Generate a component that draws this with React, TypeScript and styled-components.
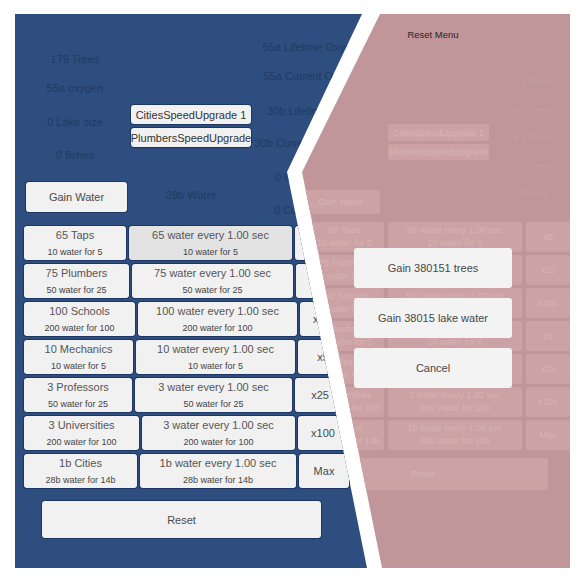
import styled, { createGlobalStyle } from 'styled-components';

const GlobalStyle = createGlobalStyle`
  html, body {
    margin: 0;
    background: #ffffff;
  }
  body {
    font-family: "Liberation Sans", Arial, sans-serif;
  }
`;

const Frame = styled.div`
  width: 584px;
  height: 584px;
  box-sizing: border-box;
  padding: 14px 0 0 15px;
  background: #ffffff;
  overflow: hidden;
`;

// both screenshots share one cell; the white chevron between them is the frame showing through
const Stage = styled.div`
  display: grid;
  width: 555px;
  height: 554px;
`;

const GamePanel = styled.div`
  grid-area: 1 / 1;
  background: #2d4e7e;
  clip-path: polygon(0 0, 347px 0, 272px 158px, 352px 554px, 0 554px);
  display: flex;
  flex-direction: column;
`;

const TopArea = styled.div`
  display: flex;
  height: 212px;
`;

const StatColumn = styled.div<{ $width: number; $ml?: number }>`
  display: flex;
  flex-direction: column;
  align-items: center;
  box-sizing: border-box;
  width: ${(p) => p.$width}px;
  margin-left: ${(p) => p.$ml ?? 0}px;
  flex-shrink: 0;
`;

const LeftStats = styled(StatColumn)`
  padding-left: 4px;
  align-items: stretch;
  text-align: center;
`;

const Stat = styled.div<{ $mt: number }>`
  margin-top: ${(p) => p.$mt}px;
  font-size: 11px;
  line-height: 14px;
  color: #213b63;
  white-space: nowrap;
  text-align: center;
`;

const UpgradeColumn = styled.div`
  display: flex;
  flex-direction: column;
  align-items: stretch;
  width: 120px;
  padding-top: 91px;
  gap: 4px;
  flex-shrink: 0;
`;

const UnityButton = styled.div<{ $pressed?: boolean }>`
  display: flex;
  align-items: center;
  justify-content: center;
  box-sizing: border-box;
  background: ${(p) => (p.$pressed ? '#e3e3e3' : '#f1f1f1')};
  border-radius: 3px;
  box-shadow: 0 0 0 1px #1d3762;
  color: #4a4a4a;
  font-size: 11px;
  white-space: nowrap;
  overflow: hidden;
`;

const SmallButton = styled(UnityButton)`
  height: 19px;
  color: #333;
`;

const GainButton = styled(UnityButton)`
  width: 101px;
  height: 30px;
  margin: 20px 0 0 7px;
`;

const Grid = styled.div`
  display: flex;
  flex-direction: column;
  gap: 4px;
  padding-left: 9px;
`;

const Row = styled.div`
  display: flex;
  gap: 3px;
  height: 34px;
`;

const Cell = styled(UnityButton)<{ $w: number }>`
  width: ${(p) => p.$w}px;
  flex-shrink: 0;
  flex-direction: column;
  justify-content: flex-start;
  padding-top: 1px;
`;

const CellTitle = styled.div`
  font-size: 11px;
  line-height: 16px;
  color: #555;
`;

const CellSub = styled.div`
  margin-top: 3px;
  font-size: 9px;
  line-height: 12px;
  color: #444;
`;

const MultButton = styled(UnityButton)`
  width: 50px;
  flex-shrink: 0;
`;

const ResetButton = styled(UnityButton)`
  width: 279px;
  height: 37px;
  margin: 13px 0 0 27px;
`;

/* ---------- faded reset-menu screenshot ---------- */

const MenuPanel = styled.div`
  grid-area: 1 / 1;
  position: relative;
  background: #c0969a;
  clip-path: polygon(365px 0, 555px 0, 555px 554px, 367px 554px, 287px 158px);
  display: flex;
  flex-direction: column;
`;

const MenuTitle = styled.div`
  height: 42px;
  padding-left: 380px;
  width: 76px;
  text-align: center;
  line-height: 42px;
  font-size: 9.5px;
  color: #2a2526;
`;

const FadedTop = styled.div`
  display: flex;
  height: 166px;
`;

const FadedLeft = styled.div`
  width: 373px;
  display: flex;
  flex-direction: column;
  align-items: flex-end;
`;

const FadedMid = styled.div`
  width: 101px;
  display: flex;
  flex-direction: column;
  gap: 3px;
  padding-top: 68px;
`;

const FadedRight = styled.div`
  flex: 1;
  display: flex;
  flex-direction: column;
  align-items: center;
  padding-top: 20px;
  gap: 16px;
`;

const FadedButton = styled.div<{ $w?: number; $h: number }>`
  display: flex;
  align-items: center;
  justify-content: center;
  box-sizing: border-box;
  width: ${(p) => (p.$w ? `${p.$w}px` : 'auto')};
  height: ${(p) => p.$h}px;
  flex-shrink: 0;
  background: #cda2a4;
  border-radius: 2px;
  color: #d7b3b4;
  font-size: 9px;
  white-space: nowrap;
  overflow: hidden;
`;

const FadedText = styled.div`
  font-size: 9px;
  line-height: 12px;
  color: #c59da0;
  white-space: nowrap;
`;

const FadedGain = styled(FadedButton)`
  margin: 134px 8px 0 0;
`;

const FadedGrid = styled.div`
  display: flex;
  flex-direction: column;
  gap: 3px;
  padding-left: 290px;
`;

const FadedRow = styled.div`
  display: flex;
  gap: 4px;
  height: 30px;
`;

const FadedCell = styled(FadedButton)`
  flex-direction: column;
  gap: 2px;
  line-height: 11px;
`;

const FadedReset = styled(FadedButton)`
  margin: 8px 0 0 283px;
`;

const Dialog = styled.div`
  position: absolute;
  left: 339px;
  top: 234px;
  width: 158px;
  display: flex;
  flex-direction: column;
  gap: 10px;
`;

const DialogButton = styled.div`
  height: 40px;
  display: flex;
  align-items: center;
  justify-content: center;
  background: #f3f3f3;
  border-radius: 3px;
  color: #474747;
  font-size: 11px;
`;

type Building = {
  title: string;
  rate: string;
  cost: string;
  mult: string;
  w1: number;
  w2: number;
};

const buildings: Building[] = [
  { title: '65 Taps', rate: '65 water every 1.00 sec', cost: '10 water for 5', mult: 'x5', w1: 102, w2: 163 },
  { title: '75 Plumbers', rate: '75 water every 1.00 sec', cost: '50 water for 25', mult: 'x25', w1: 105, w2: 161 },
  { title: '100 Schools', rate: '100 water every 1.00 sec', cost: '200 water for 100', mult: 'x100', w1: 111, w2: 159 },
  { title: '10 Mechanics', rate: '10 water every 1.00 sec', cost: '10 water for 5', mult: 'x5', w1: 109, w2: 159 },
  { title: '3 Professors', rate: '3 water every 1.00 sec', cost: '50 water for 25', mult: 'x25', w1: 108, w2: 157 },
  { title: '3 Universities', rate: '3 water every 1.00 sec', cost: '200 water for 100', mult: 'x100', w1: 115, w2: 153 },
  { title: '1b Cities', rate: '1b water every 1.00 sec', cost: '28b water for 14b', mult: 'Max', w1: 113, w2: 156 },
];

const rightStats = [
  { text: '55a Lifetime Oxygen', mt: 26 },
  { text: '55a Current Oxygen', mt: 15 },
  { text: '30b Lifetime Water', mt: 21 },
  { text: '30b Current Lake Water', mt: 18 },
  { text: '0 lifetime fishes', mt: 20 },
  { text: '0 Current fishes', mt: 19 },
];

export default function App() {
  return (
    <Frame>
      <GlobalStyle />
      <Stage>
        <GamePanel>
          <TopArea>
            <LeftStats $width={116}>
              <Stat $mt={38}>179 Trees</Stat>
              <Stat $mt={15}>55a oxygen</Stat>
              <Stat $mt={20}>0 Lake size</Stat>
              <Stat $mt={19}>0 fishes</Stat>
              <GainButton>Gain Water</GainButton>
            </LeftStats>
            <UpgradeColumn>
              <SmallButton>CitiesSpeedUpgrade 1</SmallButton>
              <SmallButton>PlumbersSpeedUpgrade</SmallButton>
              <Stat $mt={37}>28b Water</Stat>
            </UpgradeColumn>
            <StatColumn $width={110} $ml={7}>
              {rightStats.map((s) => (
                <Stat key={s.text} $mt={s.mt}>{s.text}</Stat>
              ))}
            </StatColumn>
          </TopArea>
          <Grid>
            {buildings.map((b, i) => (
              <Row key={b.title}>
                <Cell $w={b.w1}>
                  <CellTitle>{b.title}</CellTitle>
                  <CellSub>{b.cost}</CellSub>
                </Cell>
                <Cell $w={b.w2} $pressed={i === 0}>
                  <CellTitle>{b.rate}</CellTitle>
                  <CellSub>{b.cost}</CellSub>
                </Cell>
                <MultButton>{b.mult}</MultButton>
              </Row>
            ))}
          </Grid>
          <ResetButton>Reset</ResetButton>
        </GamePanel>

        <MenuPanel>
          <MenuTitle>Reset Menu</MenuTitle>
          <FadedTop>
            <FadedLeft>
              <FadedGain $w={79} $h={24}>Gain Water</FadedGain>
            </FadedLeft>
            <FadedMid>
              <FadedButton $h={17}>CitiesSpeedUpgrade 1</FadedButton>
              <FadedButton $h={16}>PlumbersSpeedUpgrade</FadedButton>
            </FadedMid>
            <FadedRight>
              <FadedText>55a Lifetime</FadedText>
              <FadedText>55a Current</FadedText>
              <FadedText>30b Lifetime</FadedText>
              <FadedText>30b Current</FadedText>
              <FadedText>0 lifetime</FadedText>
            </FadedRight>
          </FadedTop>
          <FadedGrid>
            {buildings.map((b) => (
              <FadedRow key={b.title}>
                <FadedCell $w={79} $h={30}>
                  <span>{b.title}</span>
                  <span>{b.cost}</span>
                </FadedCell>
                <FadedCell $w={134} $h={30}>
                  <span>{b.rate}</span>
                  <span>{b.cost}</span>
                </FadedCell>
                <FadedButton $w={44} $h={30}>{b.mult}</FadedButton>
              </FadedRow>
            ))}
          </FadedGrid>
          <FadedReset $w={250} $h={32}>Reset</FadedReset>
          <Dialog>
            <DialogButton>Gain 380151 trees</DialogButton>
            <DialogButton>Gain 38015 lake water</DialogButton>
            <DialogButton>Cancel</DialogButton>
          </Dialog>
        </MenuPanel>
      </Stage>
    </Frame>
  );
}
